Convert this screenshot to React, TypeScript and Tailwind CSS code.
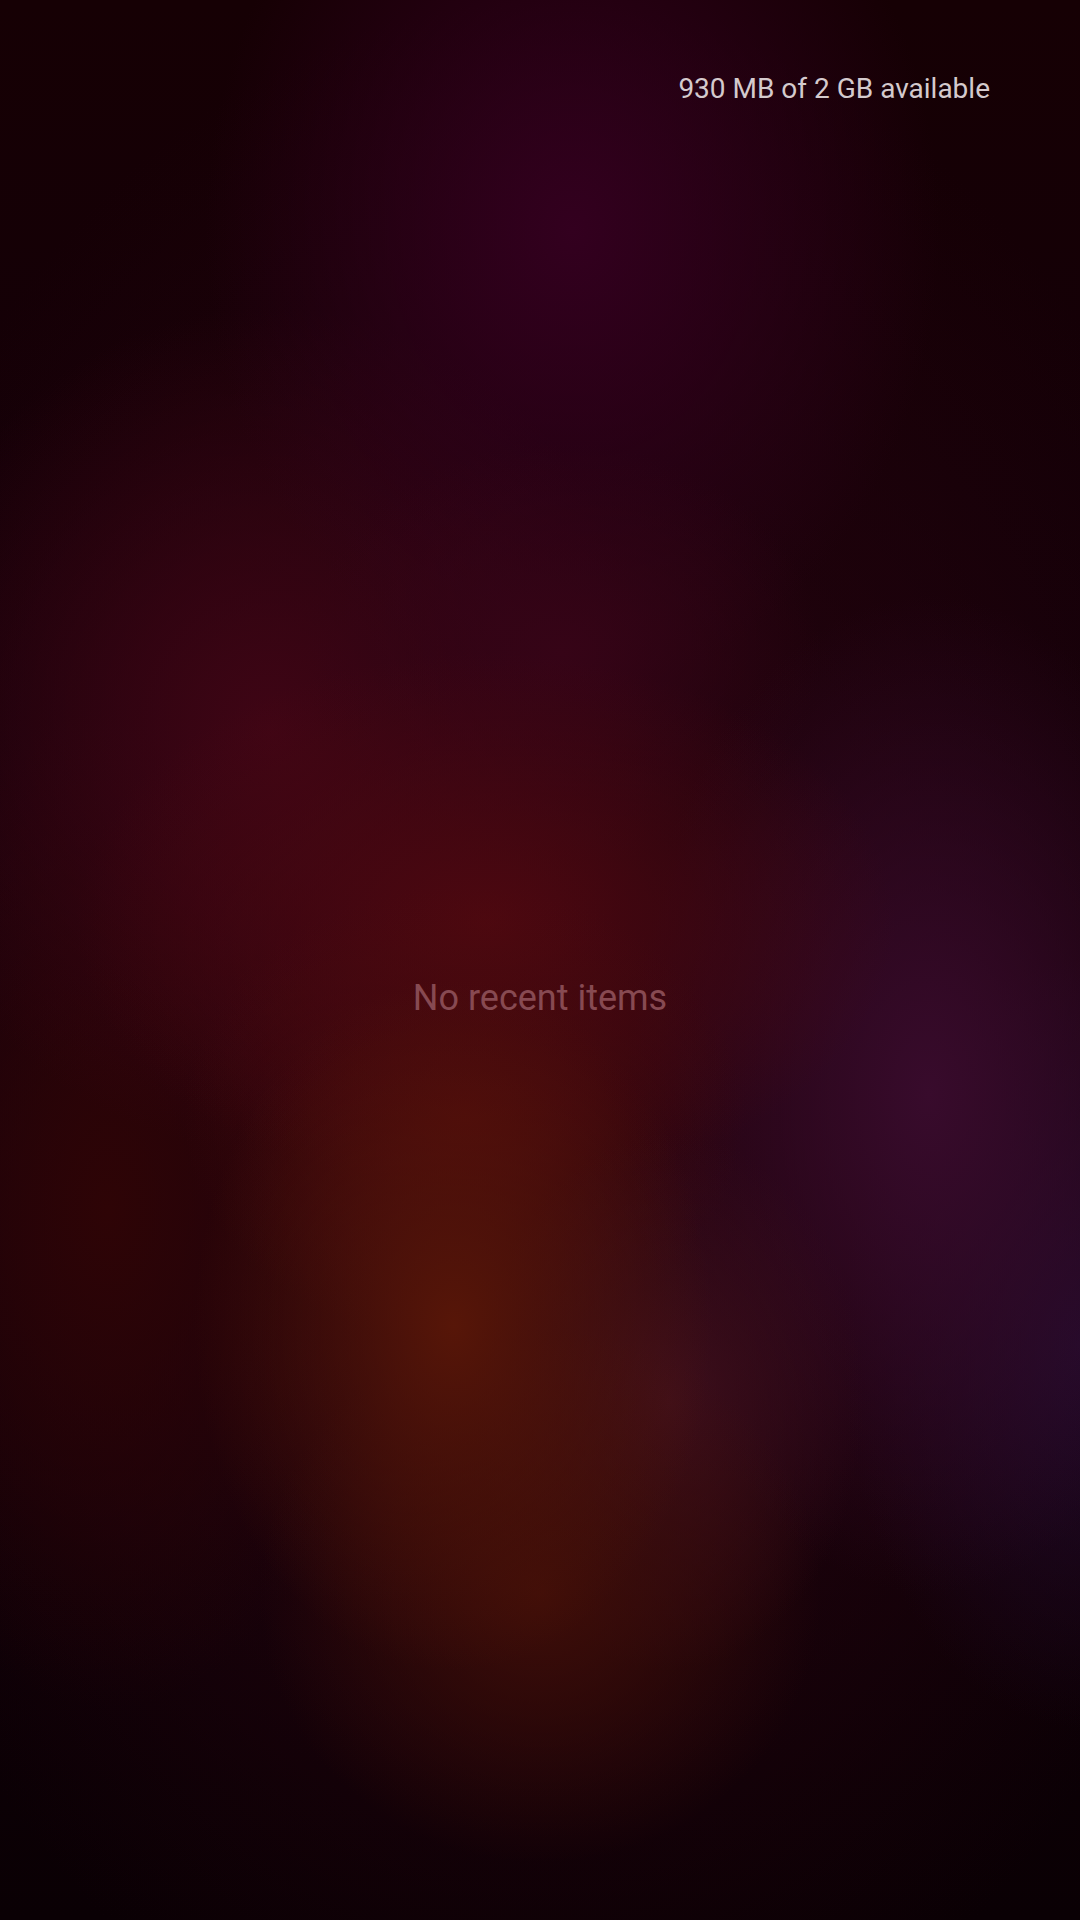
import React from 'react';

const RecentsScreen: React.FC = () => {
  return (
    <div
      className="relative flex h-[1920px] w-full flex-col overflow-hidden bg-[radial-gradient(ellipse_24%_18%_at_42%_69%,#571608_0%,rgba(87,22,8,0)_100%),radial-gradient(ellipse_26%_14%_at_50%_83%,#3f0e08_0%,rgba(63,14,8,0)_100%),radial-gradient(ellipse_18%_14%_at_62%_73%,#3e0f1c_0%,rgba(62,15,28,0)_100%),radial-gradient(ellipse_26%_12%_at_43%_58%,#4a0a0c_0%,rgba(74,10,12,0)_100%),radial-gradient(ellipse_38%_14%_at_45%_48%,#4d0810_0%,rgba(77,8,16,0)_100%),radial-gradient(ellipse_28%_26%_at_86%_57%,#380b2c_0%,rgba(56,11,44,0)_100%),radial-gradient(ellipse_22%_20%_at_100%_70%,#210a2a_0%,rgba(33,10,42,0)_100%),radial-gradient(ellipse_24%_11%_at_52%_34%,#360417_0%,rgba(54,4,23,0)_100%),radial-gradient(ellipse_34%_24%_at_53%_12%,#33001f_0%,rgba(51,0,31,0)_100%),radial-gradient(ellipse_36%_22%_at_25%_38%,#3f0515_0%,rgba(63,5,21,0)_100%),radial-gradient(ellipse_26%_26%_at_10%_63%,#2e0406_0%,rgba(46,4,6,0)_100%),radial-gradient(ellipse_70%_55%_at_50%_55%,#2a0410_0%,rgba(42,4,16,0)_100%),linear-gradient(180deg,#160004_0%,#12000a_50%,#0a0004_100%)] font-['Roboto','Liberation_Sans',sans-serif]"
    >
      {/* memory info */}
      <div className="flex justify-end pr-[90px] pt-[73px]">
        <span className="text-[28px] leading-[32px] text-[#d4cacd]">930 MB of 2 GB available</span>
      </div>

      {/* empty state */}
      <div className="flex flex-1 items-center justify-center pb-[30px]">
        <span className="text-[36px] leading-[44px] text-[#874a52]">No recent items</span>
      </div>
    </div>
  );
};

export default function App() {
  return <RecentsScreen />;
}
